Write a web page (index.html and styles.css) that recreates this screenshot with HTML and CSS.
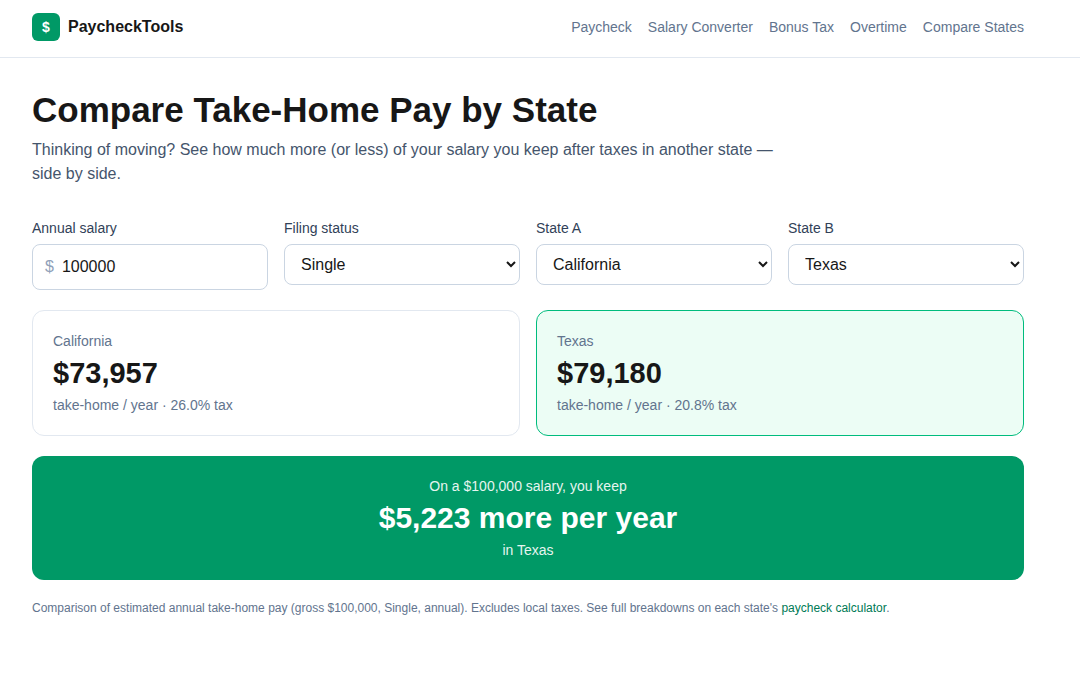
FILE: index.html
```html
<!DOCTYPE html>
<html lang="en">
<head>
<meta charset="utf-8">
<meta name="viewport" content="width=device-width, initial-scale=1">
<title>Compare Take-Home Pay by State</title>
<link rel="stylesheet" href="styles.css">
</head>
<body>
<header class="site-header">
  <div class="header-inner">
    <a class="brand" href="#"><span class="brand-mark">$</span><span class="brand-name">PaycheckTools</span></a>
    <nav class="nav">
      <a href="#">Paycheck</a>
      <a href="#">Salary Converter</a>
      <a href="#">Bonus Tax</a>
      <a href="#">Overtime</a>
      <a href="#">Compare States</a>
    </nav>
  </div>
</header>
<main class="main">
  <h1 class="title">Compare Take-Home Pay by State</h1>
  <p class="lead">Thinking of moving? See how much more (or less) of your salary you keep after taxes in another state — side by side.</p>
  <form class="fields">
    <div class="field">
      <label for="salary">Annual salary</label>
      <div class="money"><span class="money-sign">$</span><input id="salary" type="text" inputmode="numeric" value="100000"></div>
    </div>
    <div class="field">
      <label for="status">Filing status</label>
      <select id="status"><option>Single</option><option>Married</option></select>
    </div>
    <div class="field">
      <label for="state-a">State A</label>
      <select id="state-a"><option>California</option><option>Texas</option></select>
    </div>
    <div class="field">
      <label for="state-b">State B</label>
      <select id="state-b"><option>Texas</option><option>California</option></select>
    </div>
  </form>
  <section class="results">
    <div class="card">
      <p class="card-text">California</p>
      <p class="card-amount">$73,957</p>
      <p class="card-text">take-home / year · 26.0% tax</p>
    </div>
    <div class="card card-best">
      <p class="card-text">Texas</p>
      <p class="card-amount">$79,180</p>
      <p class="card-text">take-home / year · 20.8% tax</p>
    </div>
  </section>
  <section class="banner">
    <p class="banner-text">On a $100,000 salary, you keep</p>
    <p class="banner-amount">$5,223 more per year</p>
    <p class="banner-text">in Texas</p>
  </section>
  <p class="note">Comparison of estimated annual take-home pay (gross $100,000, Single, annual). Excludes local taxes. See full breakdowns on each state's <a href="#">paycheck calculator</a>.</p>
</main>
</body>
</html>
```
FILE: styles.css
```css
* { box-sizing: border-box; }
body {
  margin: 0;
  background: #fff;
  color: #171717;
  font: 16px/24px "Liberation Sans", Arial, sans-serif;
}
h1, p { margin: 0; }
a { color: inherit; text-decoration: none; }
.site-header { border-bottom: 1px solid #e2e8f0; }
.header-inner {
  max-width: 1056px;
  padding: 13px 32px 16px;
  display: flex;
  justify-content: space-between;
  align-items: center;
}
.brand { display: flex; align-items: center; gap: 8px; font-weight: 700; }
.brand-mark {
  width: 28px;
  height: 28px;
  border-radius: 6px;
  background: #009966;
  color: #fff;
  font-size: 14px;
  line-height: 28px;
  text-align: center;
}
.nav { display: flex; gap: 16px; font-size: 14px; line-height: 20px; color: #62748e; }
.main { max-width: 1056px; padding: 32px; }
.title { font-size: 35px; line-height: 40px; }
.lead { max-width: 768px; margin-top: 8px; color: #45556c; }
.fields {
  display: grid;
  grid-template-columns: repeat(4, minmax(0, 1fr));
  gap: 16px;
  margin-top: 32px;
  align-items: start;
}
.field label { display: block; margin-bottom: 6px; font-size: 14px; line-height: 20px; color: #314158; }
.money {
  display: flex;
  align-items: center;
  height: 46px;
  padding: 0 12px;
  border: 1px solid #cad5e2;
  border-radius: 8px;
}
.money-sign { color: #90a1b9; }
.money input {
  flex: 1;
  min-width: 0;
  padding: 0 8px;
  border: 0;
  outline: 0;
  background: transparent;
  font: inherit;
  color: inherit;
}
.field select {
  width: 100%;
  height: 41px;
  padding: 0 12px;
  border: 1px solid #cad5e2;
  border-radius: 8px;
  background: #fff;
  font: inherit;
  color: #171717;
}
.results { display: grid; grid-template-columns: repeat(2, minmax(0, 1fr)); gap: 16px; margin-top: 20px; }
.card { padding: 20px; border: 1px solid #e2e8f0; border-radius: 12px; }
.card-best { border-color: #00bc7d; background: #ecfdf5; }
.card-text { font-size: 14px; line-height: 20px; color: #62748e; }
.card-amount { margin: 4px 0; font-size: 29px; line-height: 36px; font-weight: 700; }
.banner {
  margin-top: 20px;
  padding: 20px;
  border-radius: 12px;
  background: #009966;
  color: #fff;
  text-align: center;
}
.banner-text { font-size: 14px; line-height: 20px; opacity: 0.9; }
.banner-amount { margin: 4px 0; font-size: 30px; line-height: 36px; font-weight: 700; }
.note { margin-top: 20px; font-size: 12px; line-height: 16px; color: #62748e; }
.note a { color: #007a55; }
```
